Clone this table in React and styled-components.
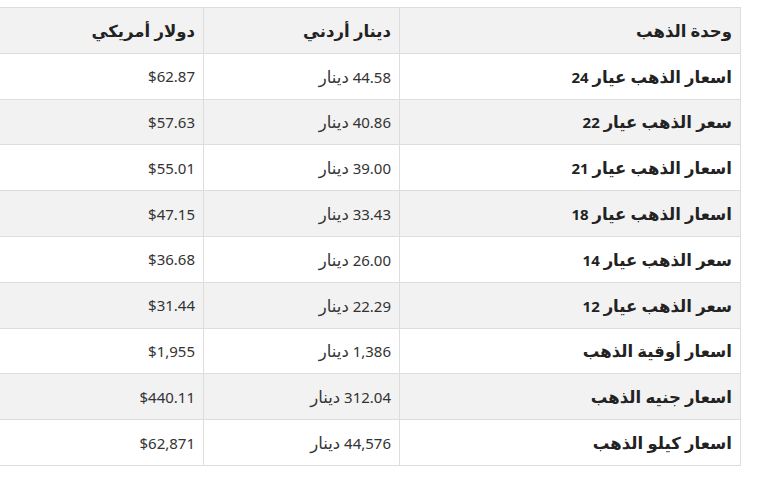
import styled, { createGlobalStyle } from 'styled-components';

const GlobalStyle = createGlobalStyle`
    html, body {
        margin: 0;
        padding: 0;
        background: #fff;
        overflow: hidden;
    }
    body {
        font-family: "Noto Sans", "DejaVu Sans", sans-serif;
        color: #333;
    }
`;

const Page = styled.div`
    direction: rtl;
    width: 762px;
    height: 488px;
    padding: 7px 21px 0 0;
    box-sizing: border-box;
    overflow: hidden;
`;

const Table = styled.table`
    width: 760px;
    table-layout: fixed;
    border-collapse: collapse;
    font-size: 15px;
`;

const Row = styled.tr`
    background: ${props => (props.$shaded ? '#f2f2f2' : '#fff')};
    height: 45.8px;
`;

const Head = styled.th`
    border: 1px solid #ddd;
    padding: 0 8px;
    text-align: right;
    font-weight: bold;
    color: #222;
    background: #f2f2f2;
`;

const Cell = styled.td`
    border: 1px solid #ddd;
    padding: 0 8px;
    text-align: right;
    font-weight: ${props => (props.$bold ? 'bold' : 'normal')};
    color: ${props => (props.$bold ? '#222' : '#333')};
`;

// arabic glyphs in the fallback font run small, bump them up a bit
const Ar = styled.span`
    font-size: 16.5px;
`;

function Text({ children }) {
    const parts = children.split(/([\u0600-\u06FF][\u0600-\u06FF ]*[\u0600-\u06FF]|[\u0600-\u06FF])/);
    return parts.map((p, i) => (i % 2 === 1 ? <Ar key={i}>{p}</Ar> : p));
}

const rows = [
    ['اسعار الذهب عيار 24', '44.58 دينار', '$62.87'],
    ['سعر الذهب عيار 22', '40.86 دينار', '$57.63'],
    ['اسعار الذهب عيار 21', '39.00 دينار', '$55.01'],
    ['اسعار الذهب عيار 18', '33.43 دينار', '$47.15'],
    ['سعر الذهب عيار 14', '26.00 دينار', '$36.68'],
    ['سعر الذهب عيار 12', '22.29 دينار', '$31.44'],
    ['اسعار أوقية الذهب', '1,386 دينار', '$1,955'],
    ['اسعار جنيه الذهب', '312.04 دينار', '$440.11'],
    ['اسعار كيلو الذهب', '44,576 دينار', '$62,871'],
];

function App() {
    return (
        <Page>
            <GlobalStyle />
            <Table>
                <colgroup>
                    <col style={{ width: 341 }} />
                    <col style={{ width: 196 }} />
                    <col />
                </colgroup>
                <thead>
                    <Row>
                        <Head><Text>وحدة الذهب</Text></Head>
                        <Head><Text>دينار أردني</Text></Head>
                        <Head><Text>دولار أمريكي</Text></Head>
                    </Row>
                </thead>
                <tbody>
                    {rows.map((r, i) => (
                        <Row key={r[0]} $shaded={i % 2 === 1}>
                            <Cell $bold><Text>{r[0]}</Text></Cell>
                            <Cell><Text>{r[1]}</Text></Cell>
                            <Cell>{r[2]}</Cell>
                        </Row>
                    ))}
                </tbody>
            </Table>
        </Page>
    );
}

export default App;
